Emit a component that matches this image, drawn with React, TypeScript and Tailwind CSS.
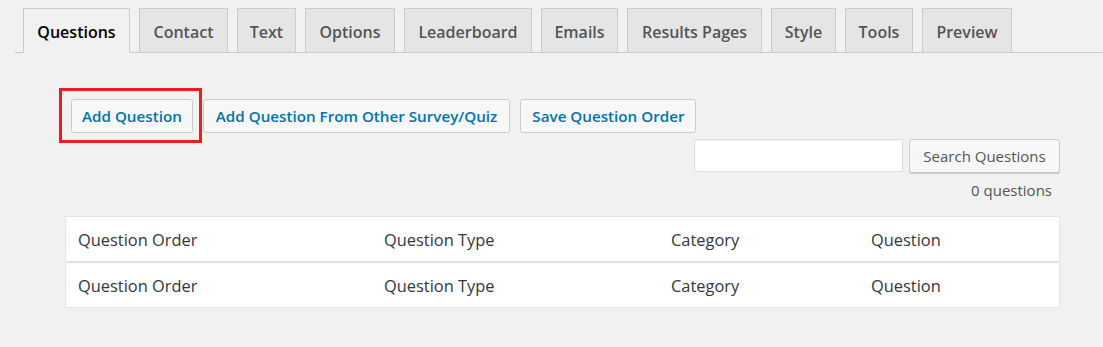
const tabs = [
  { label: 'Questions', w: 'w-[107px]' },
  { label: 'Contact', w: 'w-[89px]' },
  { label: 'Text', w: 'w-[59px]' },
  { label: 'Options', w: 'w-[90px]' },
  { label: 'Leaderboard', w: 'w-[128px]' },
  { label: 'Emails', w: 'w-[77px]' },
  { label: 'Results Pages', w: 'w-[135px]' },
  { label: 'Style', w: 'w-[65px]' },
  { label: 'Tools', w: 'w-[68px]' },
  { label: 'Preview', w: 'w-[90px]' },
]

const columns = ['Question Order', 'Question Type', 'Category', 'Question']

export default function App() {
  return (
    <div className="min-h-[347px] w-full bg-[#f1f1f1] font-['Open_Sans','Noto_Sans',sans-serif] text-[#32373c]">
      {/* tab strip */}
      <div className="ml-[15px] flex gap-[9px] border-b border-[#ccc] pt-[8px] pl-[8px]">
        {tabs.map((tab, i) => (
          <div
            key={tab.label}
            className={
              i === 0
                ? `-mb-px flex h-[45px] ${tab.w} items-center justify-center border border-[#ccc] border-b-[#f1f1f1] bg-[#f1f1f1] pt-[2px] text-[16px] font-semibold whitespace-nowrap text-black`
                : `flex h-[44px] ${tab.w} items-center justify-center border border-b-0 border-[#ccc] bg-[#e5e5e5] pt-[2px] text-[16px] font-semibold whitespace-nowrap text-[#555]`
            }
          >
            {tab.label}
          </div>
        ))}
      </div>

      <div className="pr-[43px]">
        {/* action buttons */}
        <div className="mt-[46px] ml-[71px] flex gap-[10px]">
          <div className="relative">
            <button className="h-[34px] rounded-[3px] border border-[#ccc] bg-[#f7f7f7] px-[10px] pt-[1px] text-[15.2px] font-semibold text-[#0073aa]">
              Add Question
            </button>
            <span className="pointer-events-none absolute -top-[11px] -right-[9px] -bottom-[10px] -left-[12px] border-[3px] border-[#ed1c24]" />
          </div>
          <button className="h-[34px] rounded-[3px] border border-[#ccc] bg-[#f7f7f7] px-[12px] pt-[1px] text-[15.2px] font-semibold text-[#0073aa]">
            Add Question From Other Survey/Quiz
          </button>
          <button className="h-[34px] rounded-[3px] border border-[#ccc] bg-[#f7f7f7] px-[11px] pt-[1px] text-[15.2px] font-semibold text-[#0073aa]">
            Save Question Order
          </button>
        </div>

        {/* search */}
        <div className="mt-[6px] flex justify-end gap-[6px]">
          <input
            type="text"
            className="h-[33px] w-[209px] border border-[#ddd] bg-white shadow-[inset_0_1px_2px_rgba(0,0,0,0.07)] outline-none"
          />
          <button className="h-[34px] w-[151px] rounded-[3px] border border-[#ccc] bg-[#f7f7f7] pt-[1px] text-[15px] text-[#555] shadow-[0_1px_0_#ccc]">
            Search Questions
          </button>
        </div>
        <div className="mt-[6px] pr-[8px] text-right text-[15px] text-[#555]">0 questions</div>

        {/* questions table */}
        <div className="mt-[14px] ml-[65px] border border-[#e5e5e5] bg-white text-[16.4px]">
          <div className="grid h-[46px] grid-cols-[306px_287px_200px_1fr] items-center border-b-2 border-[#e1e1e1] pt-[4px]">
            {columns.map((c) => (
              <div key={c} className="pl-[12px]">
                {c}
              </div>
            ))}
          </div>
          <div className="grid h-[44px] grid-cols-[306px_287px_200px_1fr] items-center pt-[3px]">
            {columns.map((c) => (
              <div key={c} className="pl-[12px]">
                {c}
              </div>
            ))}
          </div>
        </div>
      </div>
    </div>
  )
}
